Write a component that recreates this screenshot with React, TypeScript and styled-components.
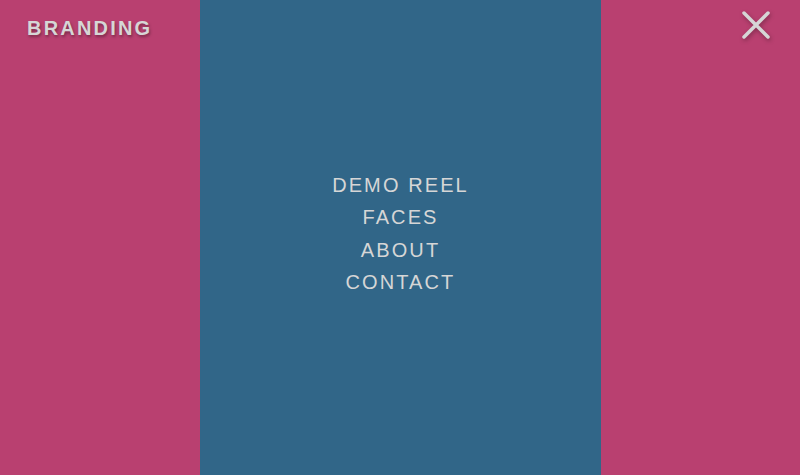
import React from 'react';
import styled, { createGlobalStyle } from 'styled-components';

const GlobalStyle = createGlobalStyle`
  html, body {
    margin: 0;
    padding: 0;
    height: 100%;
  }
  #root {
    height: 100%;
  }
`;

const Page = styled.div`
  display: grid;
  grid-template-columns: 200px 401px 1fr;
  height: 100vh;
  background-color: #b94070;
  font-family: 'Liberation Sans', Arial, sans-serif;
  color: #d6d6d6;
`;

const Side = styled.div<{ align?: 'start' | 'end' }>`
  display: flex;
  justify-content: ${(props) => (props.align === 'end' ? 'flex-end' : 'flex-start')};
  align-items: flex-start;
`;

const Brand = styled.div`
  padding: 17px 0 0 27px;
  font-size: 20px;
  font-weight: 700;
  letter-spacing: 2.2px;
  text-shadow: 1px 2px 3px rgba(0, 0, 0, 0.35);
`;

const CloseButton = styled.button`
  margin: 10px 28px 0 0;
  padding: 0;
  width: 32px;
  height: 30px;
  border: none;
  background: none;
  cursor: pointer;
  filter: drop-shadow(1px 2px 2px rgba(0, 0, 0, 0.3));
`;

const Panel = styled.nav`
  display: flex;
  flex-direction: column;
  justify-content: center;
  align-items: center;
  padding-bottom: 8px;
  background-color: #316688;
`;

const MenuItem = styled.a`
  display: block;
  font-size: 20px;
  line-height: 32.5px;
  letter-spacing: 2.1px;
  color: #d6d6d6;
  text-decoration: none;
  cursor: pointer;
`;

const items = ['DEMO REEL', 'FACES', 'ABOUT', 'CONTACT'];

export default function App() {
  return (
    <>
      <GlobalStyle />
      <Page>
        <Side>
          <Brand>BRANDING</Brand>
        </Side>
        <Panel>
          {items.map((item) => (
            <MenuItem key={item}>{item}</MenuItem>
          ))}
        </Panel>
        <Side align="end">
          <CloseButton aria-label="Close">
            <svg width="32" height="30" viewBox="0 0 32 30">
              <path d="M4 3 L28 27 M28 3 L4 27" stroke="#d6d6d6" strokeWidth="3.5" strokeLinecap="round" />
            </svg>
          </CloseButton>
        </Side>
      </Page>
    </>
  );
}
